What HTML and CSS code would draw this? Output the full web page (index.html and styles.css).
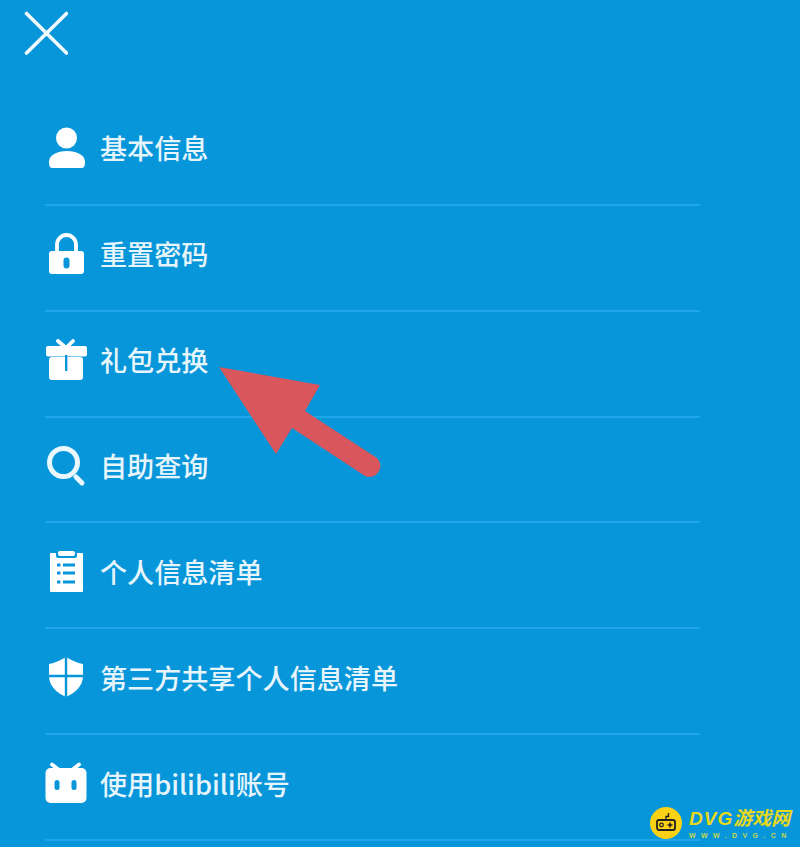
FILE: index.html
```html
<!DOCTYPE html>
<html lang="zh-CN">
<head>
    <meta charset="UTF-8">
    <meta name="viewport" content="width=device-width, initial-scale=1.0">
    <title>设置菜单</title>
    <link rel="stylesheet" href="styles.css">
</head>
<body>
<div class="page">
    <div class="top">
        <svg class="close" viewBox="0 0 44 44"><path d="M2.5 2.5 L42.5 42 M42.5 2.5 L2.5 42"/></svg>
    </div>

    <div class="menu">
        <div class="row">
            <svg class="icon" viewBox="0 0 42 42">
                <circle cx="21.5" cy="11" r="10.5"/>
                <path d="M4 35 C4 28 12 24 22 24 C32 24 40 28 40 35 C40 39.5 39 41 36 41 H8 C5 41 4 39.5 4 35 Z"/>
            </svg>
            <span class="label">基本信息</span>
        </div>
        <div class="row">
            <svg class="icon" viewBox="0 0 42 42">
                <path class="line wide" d="M12 19 V11.5 a9.5 9.5 0 0 1 19 0 V19"/>
                <rect x="4" y="18" width="35" height="23" rx="3"/>
                <rect class="cut" x="18.5" y="24.5" width="6" height="11" rx="3"/>
            </svg>
            <span class="label">重置密码</span>
        </div>
        <div class="row">
            <svg class="icon" viewBox="0 0 42 42">
                <path class="line wide" d="M13 2 L21 9 L28 2"/>
                <rect x="1" y="7" width="41" height="10.5" rx="2"/>
                <rect x="4" y="18" width="34" height="23" rx="3"/>
                <rect class="cut" x="20" y="16" width="2.4" height="16"/>
            </svg>
            <span class="label">礼包兑换</span>
        </div>
        <div class="row">
            <svg class="icon" viewBox="0 0 42 42">
                <circle class="line thick" cx="18.5" cy="17.5" r="14"/>
                <path class="line thick" d="M31 32 L37 38"/>
            </svg>
            <span class="label">自助查询</span>
        </div>
        <div class="row">
            <svg class="icon" viewBox="0 0 42 42">
                <rect x="5" y="3" width="33" height="39" rx="1"/>
                <rect class="cut" x="11" y="0" width="21" height="8" rx="2"/>
                <rect x="13" y="1" width="17" height="5" rx="2"/>
                <path class="line cutline dash" d="M12 15 H15.5 M18 15 H30 M12 23 H15.5 M18 23 H30 M12 32 H15.5 M18 32 H30"/>
            </svg>
            <span class="label">个人信息清单</span>
        </div>
        <div class="row">
            <svg class="icon" viewBox="0 0 42 42">
                <path d="M21 1 C16 4 10 7 4 8 V20 C4 30 12 37 21 41 C30 37 38 30 38 20 V8 C32 7 26 4 21 1 Z"/>
                <path class="line cutline" d="M21 1 V41 M4 20 H38"/>
            </svg>
            <span class="label">第三方共享个人信息清单</span>
        </div>
        <div class="row">
            <svg class="icon" viewBox="0 0 42 42">
                <path class="line wide" d="M7 2.5 L14 8 M34 2.5 L27 8"/>
                <rect x="0.5" y="6" width="41" height="35" rx="5"/>
                <rect class="cut" x="9.5" y="18" width="5" height="10" rx="2.5"/>
                <rect class="cut" x="26.5" y="18" width="5" height="10" rx="2.5"/>
            </svg>
            <span class="label">使用bilibili账号</span>
        </div>
    </div>

    <!-- 红色箭头 -->
    <svg class="arrow" viewBox="0 0 800 847">
        <path d="M219 367 L320 385 L305 411 L377 458 A11 11 0 0 1 365 476 L292 428 L276 454 Z"/>
    </svg>

    <!-- 水印 -->
    <div class="mark">
        <svg class="mark-logo" viewBox="0 0 32 32">
            <circle cx="16" cy="16" r="16" fill="#fcd116"/>
            <rect x="7" y="13" width="18" height="10" rx="2" fill="none" stroke="#222" stroke-width="1.8"/>
            <path d="M16 13 V9.5 H18.5 V6" fill="none" stroke="#222" stroke-width="1.4"/>
            <circle cx="11.5" cy="18" r="1.8" fill="none" stroke="#222" stroke-width="1.3"/>
            <path d="M17.5 18 H22.5 M20 15.5 V20.5" stroke="#222" stroke-width="1.6"/>
        </svg>
        <div class="mark-text">
            <div class="mark-name"><span class="mark-latin">DVG</span>游戏网</div>
            <div class="mark-url">WWW.DVG.CN</div>
        </div>
    </div>
</div>
</body>
</html>
```

FILE: styles.css
```css
body {
    margin: 0;
    background-color: #0696d9;
    font-family: "Noto Sans CJK SC", "Liberation Sans", sans-serif;
}
.page {
    position: relative;
    height: 847px;
    overflow: hidden;
}
.top {
    height: 100px;
    padding: 11px 0 0 24px;
    box-sizing: border-box;
}
.close {
    display: block;
    width: 44px;
    height: 44px;
    fill: none;
    stroke: #f2fafe;
    stroke-width: 3.6;
    stroke-linecap: round;
}
.menu {
    display: flex;
    flex-direction: column;
    width: 654px;
    height: 741px;
    margin-left: 46px;
}
.row {
    flex: 1;
    display: flex;
    align-items: center;
    gap: 13px;
    padding-bottom: 8px;
    margin-left: -1px;
    border-bottom: 2px solid #1fa6e8;
    box-sizing: border-box;
}
.icon {
    flex: none;
    width: 42px;
    height: 42px;
    fill: #fff;
}
.icon .line {
    fill: none;
    stroke: #fff;
    stroke-width: 3;
    stroke-linecap: round;
}
.icon .wide {
    stroke-width: 3.8;
}
.icon .thick {
    stroke: #eaf8fe;
    stroke-width: 5;
}
.icon .cut {
    fill: #0696d9;
}
.icon .cutline {
    stroke: #0696d9;
    stroke-width: 2.4;
    stroke-linecap: butt;
}
.icon .dash {
    stroke-width: 3;
}
.label {
    font-size: 27.1px;
    font-weight: 500;
    color: #e6f5fc;
}
.arrow {
    position: absolute;
    top: 0;
    left: 0;
    width: 800px;
    height: 847px;
    fill: #d9565c;
}
.mark {
    position: absolute;
    left: 650px;
    top: 805px;
    display: flex;
    align-items: center;
    gap: 7px;
}
.mark-logo {
    width: 32px;
    height: 32px;
}
.mark-name {
    font-size: 19px;
    line-height: 24px;
    font-weight: 700;
    font-style: italic;
    color: #e9d81c;
    white-space: nowrap;
}
.mark-latin {
    font-family: "Liberation Sans", sans-serif;
    letter-spacing: 1px;
}
.mark-url {
    font-family: "Liberation Sans", sans-serif;
    font-size: 7px;
    line-height: 9px;
    font-weight: 700;
    letter-spacing: 5.4px;
    color: #c4d84e;
    white-space: nowrap;
}
```
